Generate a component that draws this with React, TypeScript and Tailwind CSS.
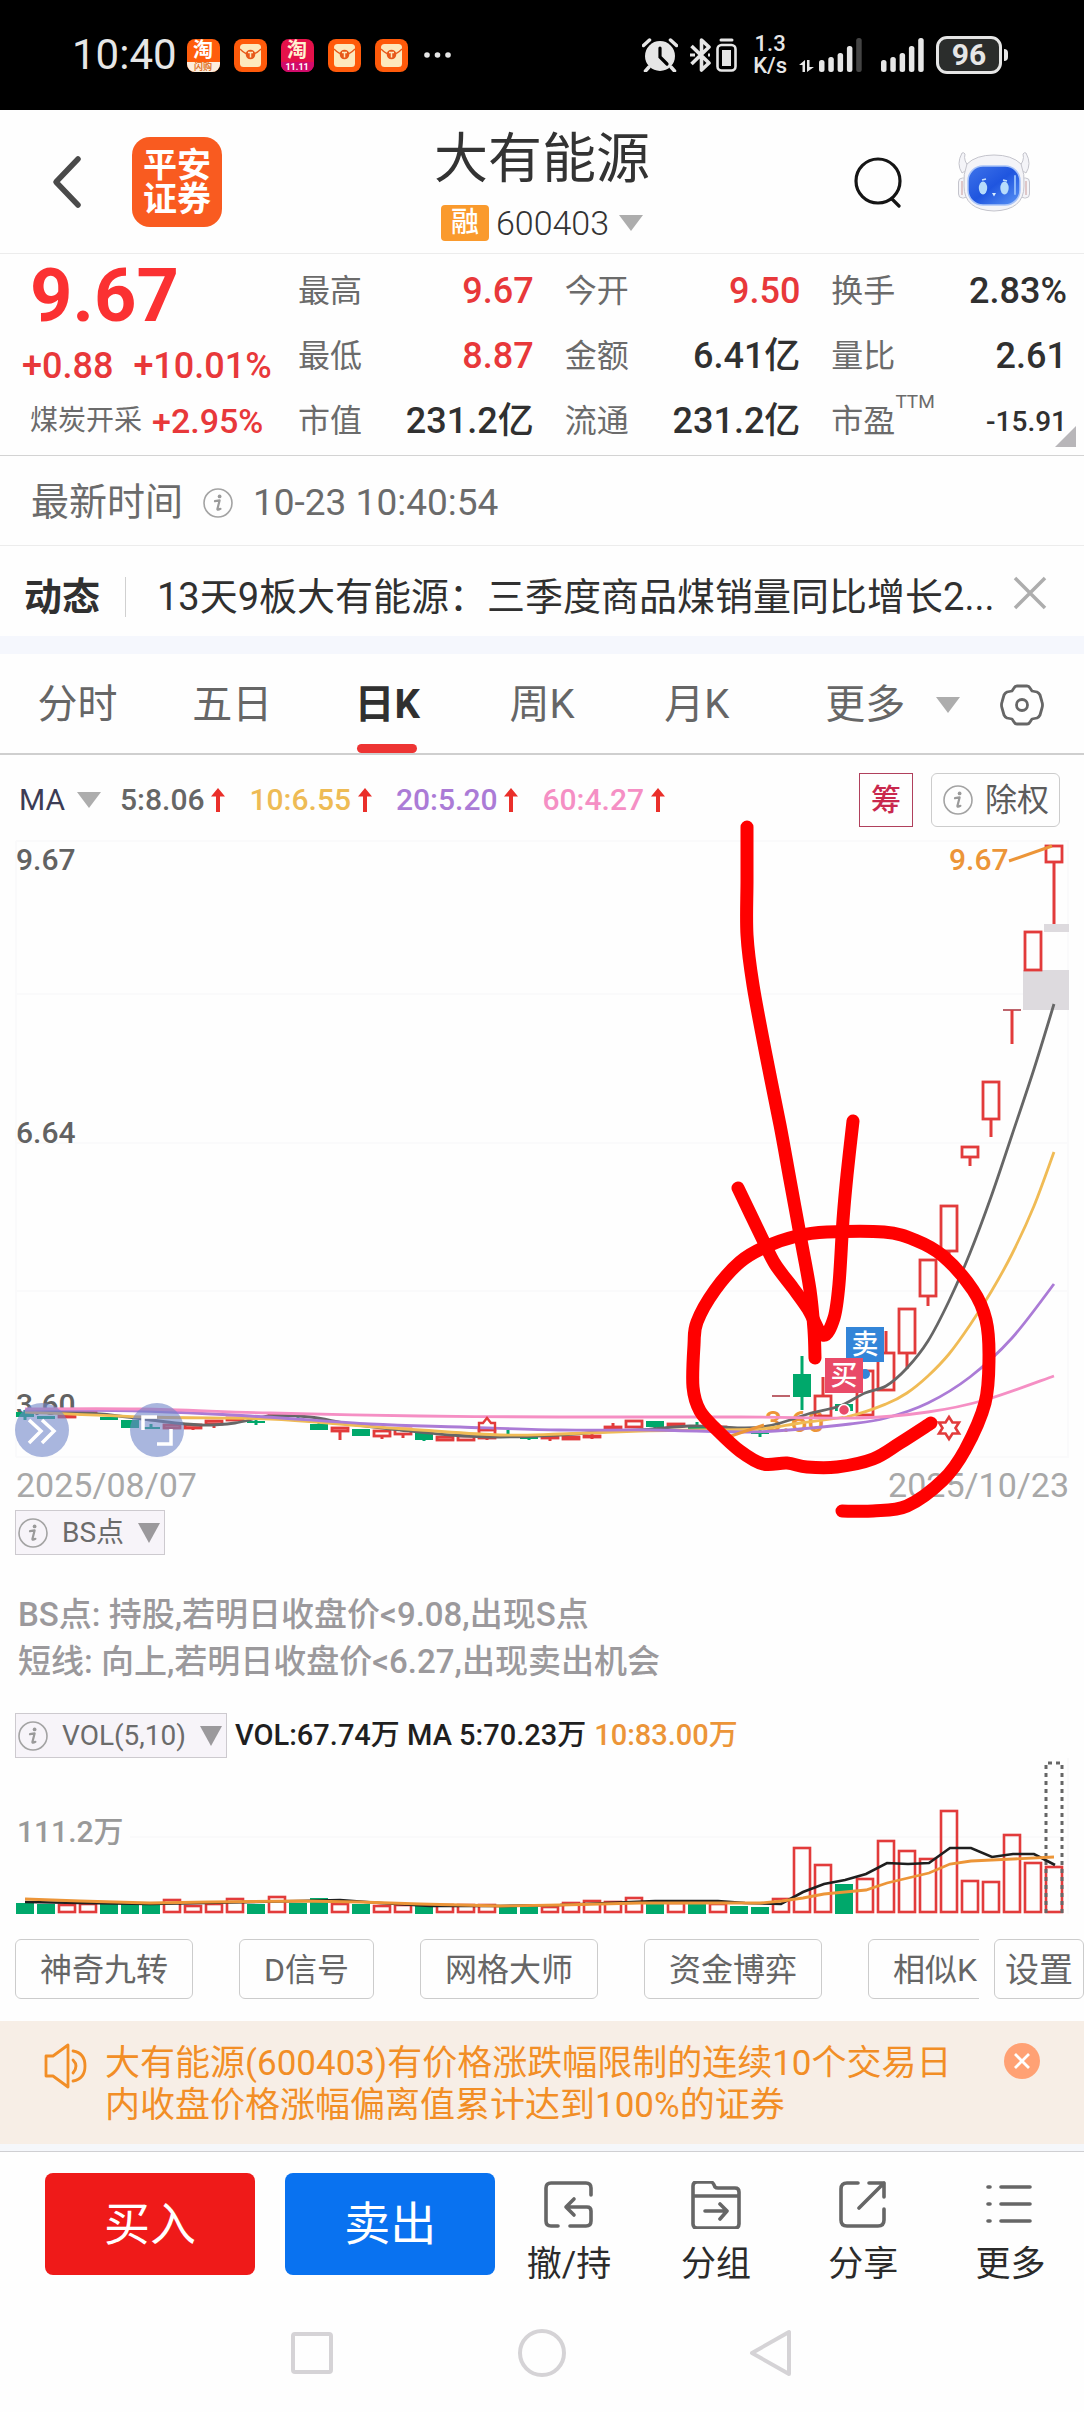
import type { ReactNode } from "react";

const RED = "#e23b3b";
const GREEN = "#00a86b";

/* ---------- small shared pieces ---------- */

function InfoIcon({ className = "h-[30px] w-[30px]" }: { className?: string }) {
  return (
    <svg viewBox="0 0 30 30" className={className} fill="none" aria-hidden="true">
      <circle cx="15" cy="15" r="14" stroke="#a3a3a3" strokeWidth="1.6" />
      <circle cx="16.6" cy="8.4" r="1.9" fill="#9a9a9a" />
      <path d="M12 13.2 L16.6 12.4 L14.4 21 Q14.2 22.6 17.4 20.8" stroke="#9a9a9a" strokeWidth="2.2" strokeLinejoin="round" strokeLinecap="round" />
    </svg>
  );
}

function Caret({ className = "h-4 w-6", color = "#adadad" }: { className?: string; color?: string }) {
  return (
    <svg viewBox="0 0 24 16" preserveAspectRatio="none" className={className} aria-hidden="true">
      <path d="M0 0H24L12 16Z" fill={color} />
    </svg>
  );
}

function UpArrow() {
  return (
    <svg viewBox="0 0 14 24" className="h-6 w-3.5" aria-hidden="true">
      <path d="M7 0L14 8.5H9V24H5V8.5H0Z" fill="#ea2f2a" />
    </svg>
  );
}

/* ---------- status bar ---------- */

function EnvelopeIcon() {
  return (
    <svg viewBox="0 0 33 33" className="h-[33px] w-[33px]" aria-hidden="true">
      <rect width="33" height="33" rx="8" fill="#ff5a0a" />
      <rect x="6" y="5" width="21" height="23" rx="3.5" fill="#fde9bd" />
      <path d="M6 10Q16.5 21 27 10" fill="none" stroke="#e8591a" strokeWidth="1.3" />
      <circle cx="16.5" cy="15.5" r="4.8" fill="#e8591a" />
      <path d="M14 13.5H19M16.5 13.5V18.5" stroke="#fde9bd" strokeWidth="1.5" />
    </svg>
  );
}

function SaleIcon({ festive = false }: { festive?: boolean }) {
  return (
    <div className={`flex h-[33px] w-[33px] flex-col items-center overflow-hidden rounded-lg font-bold text-white ${festive ? "bg-[#e5114a]" : "bg-[#ff5d0c]"}`}>
      <span className={`text-[20px] leading-[23px] ${festive ? "text-[#fff3d0]" : ""}`}>淘</span>
      {festive ? (
        <span className="w-full bg-[#d10b6b] text-center text-[9px] leading-[10px]">11.11</span>
      ) : (
        <span className="w-full bg-[#fdeedd] text-center text-[9px] leading-[10px] text-[#e0762f]">闪购</span>
      )}
    </div>
  );
}

function Signal({ dim = false }: { dim?: boolean }) {
  const tops = [22, 19, 15, 8, 0];
  return (
    <svg viewBox="0 0 43 34" className="h-[34px] w-[43px]" aria-hidden="true">
      {tops.map((t, i) => (
        <rect key={i} x={i * 9.3} y={t} width="5.5" height={34 - t} rx="2.5" fill={dim && i === 4 ? "#444" : "#e6e6e6"} />
      ))}
    </svg>
  );
}

function StatusBar() {
  return (
    <div className="flex items-center justify-between bg-black px-[72px] py-[33px] text-[#e6e6e6]">
      <div className="flex items-center">
        <span className="mr-2.5 text-[42px] leading-[38px]">10:40</span>
        <div className="flex items-center gap-3.5">
          <SaleIcon />
          <EnvelopeIcon />
          <SaleIcon festive />
          <EnvelopeIcon />
          <EnvelopeIcon />
        </div>
        <svg viewBox="0 0 27 8" className="ml-4 h-2 w-[27px]" fill="#e6e6e6" aria-hidden="true">
          <circle cx="3" cy="4" r="2.8" />
          <circle cx="13.5" cy="4" r="2.8" />
          <circle cx="24" cy="4" r="2.8" />
        </svg>
      </div>
      <div className="flex items-center">
        <svg viewBox="0 0 36 34" className="h-[34px] w-9" aria-hidden="true">
          <circle cx="18" cy="18" r="15" fill="#e6e6e6" />
          <path d="M1.5 7.5L7.5 2M34.5 7.5L28.5 2M7 29L3.5 33M29 29L32.5 33" stroke="#e6e6e6" strokeWidth="3.5" strokeLinecap="round" />
          <path d="M18 10V19L25 26" fill="none" stroke="#000" strokeWidth="3.2" strokeLinecap="round" />
        </svg>
        <svg viewBox="0 0 22 34" className="ml-3 h-[34px] w-[22px]" fill="none" stroke="#e6e6e6" strokeWidth="3.6" strokeLinejoin="round" aria-hidden="true">
          <path d="M1.5 8L19 25L11.5 32V2L19 9L1.5 26" />
          <path d="M0 17H5M18 17H20" strokeWidth="3" />
        </svg>
        <svg viewBox="0 0 21 34" className="ml-1 h-[34px] w-[21px]" aria-hidden="true">
          <path d="M5 2H16" stroke="#e6e6e6" strokeWidth="3" strokeLinecap="round" />
          <rect x="1.5" y="7" width="18" height="25.5" rx="4" fill="none" stroke="#e6e6e6" strokeWidth="2.6" />
          <rect x="6" y="12" width="9" height="16" fill="#e6e6e6" />
        </svg>
        <div className="ml-4 text-center text-[22px] leading-[22px] font-medium">
          <div>1.3</div>
          <div>K/s</div>
        </div>
        <svg viewBox="0 0 16 12" className="mb-[5px] ml-3 h-3 w-4 self-end" fill="#e6e6e6" aria-hidden="true">
          <path d="M0 5L6 0V12H3.5V5ZM8 0H10.5V7H15L8 12Z" />
        </svg>
        <div className="ml-1">
          <Signal dim />
        </div>
        <div className="ml-[19px]">
          <Signal />
        </div>
        <div className="ml-3 flex h-[38px] w-[66px] items-center justify-center rounded-[11px] border-[3px] border-[#e6e6e6] bg-[#2b2d2c] text-[30px] leading-[30px] font-bold">96</div>
        <div className="mr-1 ml-0.5 h-3 w-1 rounded-r bg-[#e6e6e6]" />
      </div>
    </div>
  );
}

/* ---------- header ---------- */

function RobotIcon() {
  return (
    <svg viewBox="0 0 72 60" className="h-[60px] w-[72px]" aria-hidden="true">
      <defs>
        <linearGradient id="visor" x1="0" y1="0" x2="1" y2="1">
          <stop offset="0" stopColor="#3f74ea" />
          <stop offset="0.5" stopColor="#1f55df" />
          <stop offset="1" stopColor="#5b95f5" />
        </linearGradient>
      </defs>
      <g fill="#f4f4f8" stroke="#c4c4cc" strokeWidth="1">
        <path d="M4 1Q-2 12 4 21L12 16Q5 9 7 2Q6 0 4 1ZM68 1Q74 12 68 21L60 16Q67 9 65 2Q66 0 68 1Z" />
        <rect x="0.5" y="26" width="9" height="20" rx="4" />
        <rect x="62.5" y="26" width="9" height="20" rx="4" />
        <path d="M9 12Q18 3 36 3Q54 3 63 12Q67 22 66 34Q66 58 36 59Q6 58 6 34Q5 22 9 12Z" />
      </g>
      <path d="M4 29V43M68 29V43" stroke="#dfc7c9" strokeWidth="2" />
      <rect x="10" y="14" width="52" height="39" rx="15" fill="url(#visor)" stroke="#a9c4f8" strokeWidth="1.5" />
      <ellipse cx="25" cy="36" rx="4.2" ry="6.5" fill="#b7dcfb" />
      <ellipse cx="46.5" cy="36" rx="4.2" ry="6.5" fill="#b7dcfb" />
      <path d="M34 41H38L36 44.5Z" fill="#d9edff" />
      <path d="M24 28L28 27M45 28L49 29" stroke="#c8e2fc" strokeWidth="1.5" />
      <path d="M57 24V42" stroke="#8cb8fb" strokeWidth="2" strokeLinecap="round" />
    </svg>
  );
}

function Header() {
  return (
    <header className="grid grid-cols-[1fr_auto_1fr] items-center border-b border-[#ececec] pt-[17px] pb-3">
      <div className="flex items-center gap-[50px] pb-1 pl-[52px]">
        <button type="button" aria-label="返回">
          <svg viewBox="0 0 30 54" className="h-[54px] w-[30px]" fill="none" stroke="#4a4a4a" strokeWidth="5.5" strokeLinecap="round" strokeLinejoin="round">
            <path d="M26 4L4 27L26 50" />
          </svg>
        </button>
        <div className="flex h-[90px] w-[90px] flex-col items-center justify-center rounded-[18px] bg-[#f95b20] text-[34px] leading-[34px] font-bold text-white">
          <span>平安</span>
          <span>证券</span>
        </div>
      </div>
      <div className="flex flex-col items-center text-[#333]">
        <h1 className="text-[54px] leading-[66px]">大有能源</h1>
        <button type="button" className="mt-3 flex items-center text-[34px] leading-9 font-light">
          <span className="mr-[7px] rounded-sm bg-[#fa9a2d] px-2.5 text-[28px] leading-9 font-medium text-white">融</span>
          600403
          <Caret className="ml-2.5 h-4 w-6" />
        </button>
      </div>
      <div className="flex items-center justify-end gap-14 pr-[54px] pb-1">
        <button type="button" aria-label="搜索">
          <svg viewBox="0 0 48 52" className="h-[52px] w-12" fill="none" stroke="#151515" strokeWidth="3.2" strokeLinecap="round">
            <circle cx="24" cy="25" r="22" />
            <path d="M38 43L45 50" />
          </svg>
        </button>
        <button type="button" aria-label="智能助手">
          <RobotIcon />
        </button>
      </div>
    </header>
  );
}

/* ---------- quote ---------- */

type Stat = { label: string; value: string; up?: boolean; sup?: string; small?: boolean };

const stats: Stat[] = [
  { label: "最高", value: "9.67", up: true },
  { label: "今开", value: "9.50", up: true },
  { label: "换手", value: "2.83%" },
  { label: "最低", value: "8.87", up: true },
  { label: "金额", value: "6.41亿" },
  { label: "量比", value: "2.61" },
  { label: "市值", value: "231.2亿" },
  { label: "流通", value: "231.2亿" },
  { label: "市盈", value: "-15.91", sup: "TTM", small: true },
];

function Quote() {
  return (
    <section className="relative flex border-b border-[#d3d3d3]">
      <div className="w-[27.5%] shrink-0 text-[#e8383a]">
        <div className="pl-[30px] text-[74px] leading-[84px] font-bold text-[#fb3132]">9.67</div>
        <div className="flex gap-5 pl-[22px] text-[36px] leading-[56px] font-medium">
          <span>+0.88</span>
          <span>+10.01%</span>
        </div>
        <div className="flex items-center gap-2.5 pl-[30px] text-[34px] leading-[54px] font-medium">
          <span className="text-[28px] font-normal text-[#6b6b6b]">煤炭开采</span>
          <span>+2.95%</span>
        </div>
      </div>
      <dl className="grid flex-1 grid-cols-3 gap-x-[31px] pt-[5px] pr-[17px] pb-px">
        {stats.map((s) => (
          <div key={s.label} className="flex justify-between leading-[65px]">
            <dt className="text-[32px] text-[#6b6b6b]">
              {s.label}
              {s.sup && <sup className="-top-6 text-[19px] leading-none">{s.sup}</sup>}
            </dt>
            <dd className={`font-medium ${s.small ? "text-[28px]" : "text-[36px]"} ${s.up ? "text-[#e8383a]" : "text-[#303030]"}`}>{s.value}</dd>
          </div>
        ))}
      </dl>
      <svg viewBox="0 0 21 21" className="absolute right-2 bottom-2 h-[21px] w-[21px]" aria-hidden="true">
        <path d="M21 0V21H0Z" fill="#b8b6b9" />
      </svg>
    </section>
  );
}

function News() {
  return (
    <>
      <div className="flex items-center border-b border-[#ececec] px-[31px] pt-[17px] pb-[13px] leading-[59px] text-[#6b6b6b]">
        <span className="mr-5 text-[38px]">最新时间</span>
        <InfoIcon />
        <time className="ml-5 text-[37px]">10-23 10:40:54</time>
      </div>
      <div className="flex items-center pt-[21px] pr-[37px] pb-[9px] pl-6 text-[38px] leading-[60px] text-[#303030]">
        <strong className="font-bold">动态</strong>
        <div className="mr-[31px] ml-[25px] h-10 w-px bg-[#d0d0d0]" />
        <a href="#news" className="min-w-0 flex-1 truncate">13天9板大有能源：三季度商品煤销量同比增长2...</a>
        <button type="button" aria-label="关闭动态" className="pb-2">
          <svg viewBox="0 0 34 34" className="h-[34px] w-[34px]" stroke="#adadad" strokeWidth="3.5">
            <path d="M2 2L32 32M32 2L2 32" />
          </svg>
        </button>
      </div>
      <div className="h-[18px] bg-[#f5f7fd]" />
    </>
  );
}

/* ---------- chart tabs ---------- */

function Tabs() {
  const tabs = ["分时", "五日", "日K", "周K", "月K"];
  return (
    <nav className="grid grid-cols-7 border-b-2 border-[#cfcfcf] text-[40px] text-[#666]">
      {tabs.map((t) => {
        const on = t === "日K";
        return (
          <button key={t} type="button" className="flex flex-col items-center pt-3">
            <span className={`leading-[78px] ${on ? "font-bold text-[#303030]" : ""}`}>{t}</span>
            <span className={`h-[9px] w-[60px] rounded-full ${on ? "bg-[#ee3433]" : ""}`} />
          </button>
        );
      })}
      <div className="col-span-2 flex items-center pt-0.5 pl-[51px]">
        <button type="button" className="flex items-center">
          更多
          <Caret className="ml-[31px] h-4 w-6" />
        </button>
        <button type="button" aria-label="图表设置" className="ml-10">
          <svg viewBox="0 0 44 44" className="h-11 w-11" fill="none" stroke="#666" strokeWidth="2.8" strokeLinejoin="round">
            <path d="M17 3H27Q29 3 30 5L32 8L37 9Q39 10 40 12L42 19Q43 22 42 25L40 32Q39 34 37 35L32 36L30 39Q29 41 27 41H17Q15 41 14 39L12 36L7 35Q5 34 4 32L2 25Q1 22 2 19L4 12Q5 10 7 9L12 8L14 5Q15 3 17 3Z" />
            <circle cx="22" cy="22" r="5.5" />
          </svg>
        </button>
      </div>
    </nav>
  );
}

function MaRow() {
  const items = [
    { t: "5:8.06", c: "text-[#666]" },
    { t: "10:6.55", c: "text-[#eebb55]" },
    { t: "20:5.20", c: "text-[#ab7bd6]" },
    { t: "60:4.27", c: "text-[#f58fc4]" },
  ];
  return (
    <div className="flex items-center pt-[18px] pr-6 pb-2 pl-[19px] text-[30px] leading-[54px] font-medium">
      <button type="button" className="mr-[19px] flex items-center gap-3 font-normal text-[#3c3c55]">
        MA
        <Caret />
      </button>
      <div className="flex gap-6">
        {items.map((i) => (
          <span key={i.t} className={`flex items-center gap-[7px] ${i.c}`}>
            {i.t}
            <UpArrow />
          </span>
        ))}
      </div>
      <button type="button" className="ml-auto border border-[#b0405c] px-[11px] text-[30px] leading-[52px] text-[#c9284d]">筹</button>
      <button type="button" className="ml-[18px] flex items-center gap-3 rounded-md border border-[#ccc] pr-2.5 pl-[11px] text-[32px] leading-[52px] font-normal text-[#5c5c5c]">
        <InfoIcon />
        除权
      </button>
    </div>
  );
}

/* ---------- price chart ---------- */

const cx = (i: number) => 25 + i * 21;

// [index, kind, body top, body bottom, high, low]
type Candle = [number, "u" | "d", number, number, number, number];

const candles: Candle[] = [
  [0, "d", 1412, 1417, 1410, 1420],
  [1, "d", 1416, 1419, 1416, 1419],
  [2, "u", 1415, 1417, 1415, 1417],
  [3, "u", 1412, 1414, 1412, 1414],
  [4, "d", 1417, 1420, 1417, 1420],
  [5, "d", 1420, 1428, 1420, 1428],
  [6, "d", 1427, 1429, 1424, 1429],
  [7, "u", 1425, 1428, 1425, 1428],
  [8, "u", 1425, 1428, 1425, 1430],
  [9, "u", 1421, 1424, 1421, 1428],
  [10, "u", 1418, 1420, 1418, 1420],
  [11, "d", 1421, 1423, 1418, 1425],
  [12, "u", 1415, 1416, 1414, 1418],
  [13, "d", 1416, 1417, 1414, 1418],
  [14, "d", 1424, 1430, 1418, 1430],
  [15, "u", 1428, 1431, 1428, 1440],
  [16, "d", 1429, 1436, 1429, 1436],
  [17, "u", 1431, 1436, 1431, 1439],
  [18, "u", 1429, 1434, 1429, 1438],
  [19, "d", 1430, 1440, 1429, 1441],
  [20, "u", 1437, 1440, 1436, 1441],
  [21, "u", 1436, 1440, 1436, 1440],
  [22, "u", 1430, 1438, 1428, 1440],
  [23, "d", 1434, 1435, 1430, 1436],
  [24, "d", 1437, 1439, 1434, 1440],
  [25, "u", 1437, 1438, 1436, 1441],
  [26, "u", 1437, 1439, 1436, 1440],
  [27, "u", 1436, 1437, 1431, 1439],
  [28, "u", 1427, 1428, 1423, 1430],
  [29, "u", 1421, 1427, 1420, 1428],
  [30, "d", 1421, 1427, 1421, 1428],
  [31, "u", 1424, 1426, 1423, 1427],
  [32, "d", 1426, 1429, 1422, 1430],
  [33, "u", 1427, 1428, 1425, 1430],
  [34, "d", 1428, 1430, 1427, 1432],
  [35, "d", 1433, 1434, 1430, 1437],
  [37, "d", 1374, 1397, 1356, 1410],
  [38, "u", 1396, 1416, 1377, 1416],
  [39, "d", 1404, 1411, 1404, 1411],
  [40, "u", 1371, 1415, 1371, 1415],
  [41, "u", 1353, 1390, 1331, 1390],
  [42, "u", 1309, 1353, 1309, 1369],
  [43, "u", 1260, 1296, 1260, 1306],
  [44, "u", 1206, 1251, 1206, 1258],
  [45, "u", 1147, 1157, 1147, 1166],
  [46, "u", 1082, 1119, 1082, 1137],
  [48, "u", 932, 970, 932, 970],
  [49, "u", 846, 862, 846, 924],
];

const starPath = "M0 -11L3.5 -5.5H10L6.5 0L10 5.5H3.5L0 11L-3.5 5.5H-10L-6.5 0L-10 -5.5H-3.5Z";

function smooth(points: number[][]) {
  let d = `M${points[0][0]} ${points[0][1]}`;
  for (let i = 0; i < points.length - 1; i++) {
    const a = points[Math.max(i - 1, 0)];
    const b = points[i];
    const c = points[i + 1];
    const e = points[Math.min(i + 2, points.length - 1)];
    d += `C${b[0] + (c[0] - a[0]) / 6} ${b[1] + (c[1] - a[1]) / 6} ${c[0] - (e[0] - b[0]) / 6} ${c[1] - (e[1] - b[1]) / 6} ${c[0]} ${c[1]}`;
  }
  return d;
}

const averages = [
  { color: "#666", pts: [[25, 1410], [100, 1414], [150, 1420], [200, 1425], [235, 1423], [270, 1416], [310, 1417], [350, 1424], [400, 1430], [450, 1435], [500, 1437], [560, 1435], [600, 1432], [640, 1430], [690, 1426], [720, 1427], [745, 1428], [768, 1426], [790, 1420], [811, 1413], [840, 1406], [865, 1393], [886, 1386], [907, 1368], [928, 1341], [949, 1301], [970, 1253], [991, 1197], [1012, 1135], [1034, 1069], [1054, 1004]] },
  { color: "#f0bb55", pts: [[25, 1412], [150, 1417], [270, 1419], [350, 1425], [420, 1430], [500, 1435], [560, 1434], [640, 1431], [700, 1430], [760, 1429], [800, 1423], [850, 1416], [886, 1404], [907, 1393], [928, 1376], [949, 1354], [970, 1325], [991, 1292], [1012, 1254], [1034, 1206], [1054, 1152]] },
  { color: "#ab7bd6", pts: [[25, 1410], [140, 1411], [250, 1416], [370, 1424], [460, 1427], [560, 1430], [650, 1430], [750, 1432], [800, 1429], [850, 1424], [886, 1418], [928, 1403], [970, 1377], [1012, 1338], [1054, 1284]] },
  { color: "#f58fc4", pts: [[25, 1409], [140, 1409], [270, 1413], [420, 1416], [560, 1417], [740, 1417], [860, 1418], [928, 1412], [985, 1400], [1054, 1376]] },
];

const loop = [[842, 1511], [873, 1511], [907, 1506], [943, 1480], [965, 1450], [985, 1403], [989, 1358], [986, 1320], [973, 1290], [943, 1256], [915, 1240], [884, 1232], [827, 1232], [797, 1236], [765, 1247], [740, 1262], [715, 1290], [697, 1322], [694, 1345], [693, 1387], [700, 1411], [717, 1430], [740, 1451], [763, 1464], [787, 1463], [807, 1467], [837, 1467], [873, 1459], [900, 1443], [931, 1423]];
const shaft = [[747, 827], [747, 880], [747, 935], [753, 985], [766, 1055], [780, 1125], [790, 1180], [801, 1240], [810, 1290], [814, 1330], [815, 1358]];
const head = [[738, 1188], [762, 1238], [775, 1264], [793, 1288], [808, 1309], [823, 1335], [834, 1318], [839, 1284], [843, 1220], [847, 1175], [853, 1121]];

function PriceChart() {
  return (
    <div className="relative">
      <svg viewBox="0 835 1084 675" className="block w-full overflow-visible" fill="none" role="img" aria-label="日K线图">
        <path d="M16 841H1069M16 994H1069M16 1143H1069M16 1291H1069M16 1457H1069M1068 841V1457M16 841V1457" stroke="#fafafb" strokeWidth="2" />
        <g fill="#626262" fontSize="30" fontWeight="500">
          <text x="16" y="870">9.67</text>
          <text x="16" y="1143">6.64</text>
          <text x="16" y="1415">3.60</text>
        </g>
        <g fill="#a8a8a8" fontSize="34">
          <text x="16" y="1497">2025/08/07</text>
          <text x="1069" y="1497" textAnchor="end">2025/10/23</text>
        </g>
        <g fill="#ec9538" fontSize="30" fontWeight="500">
          <text x="949" y="870">9.67</text>
          <text x="765" y="1432">3.60</text>
        </g>

        <path d="M1023 970H1069V1010H1023ZM1044 924H1069V932H1044Z" fill="#dddade" />

        {candles.map(([i, k, top, bottom, high, low]) => {
          const x = cx(i);
          const color = k === "u" ? RED : GREEN;
          return (
            <g key={i} stroke={color} strokeWidth="3">
              <path d={`M${x} ${high}V${top}M${x} ${bottom}V${low}`} />
              {k === "u" ? (
                <rect x={x - 8} y={top} width="16" height={bottom - top} strokeWidth="2.8" />
              ) : (
                <rect x={x - 9} y={top} width="18" height={bottom - top} fill={color} stroke="none" />
              )}
            </g>
          );
        })}
        <path d="M772 1396H790M1003 1010H1021" stroke="#a8323c" strokeWidth="1.5" />
        <path d="M1012 1010V1044" stroke={RED} strokeWidth="3" />

        {averages.map((a) => (
          <path key={a.color} d={smooth(a.pts)} stroke={a.color} strokeWidth="2.8" />
        ))}
        <path d="M1009 861L1052 846" stroke="#ec9538" strokeWidth="3" />
        <path d="M728 1437L764 1425" stroke="#ec9538" strokeWidth="3" />

        <path d={starPath} transform="translate(949 1428)" stroke={RED} strokeWidth="2.6" />
        <path d="M479 1431V1423H483L487 1418L491 1423H495V1431" stroke={RED} strokeWidth="2.4" />

        <circle cx="865" cy="1374" r="5" fill="#3385d8" />
        <rect x="846" y="1327" width="38" height="35" fill="#3385d8" />
        <rect x="825" y="1358" width="38" height="35" fill="#e94a68" />
        <g fill="#fff" fontSize="27" fontWeight="500" textAnchor="middle">
          <text x="865" y="1354">卖</text>
          <text x="844" y="1385">买</text>
        </g>
        <circle cx="844" cy="1410" r="5.5" fill="#e94a68" stroke="#fff" strokeWidth="1.5" />

        <g stroke="#f00" strokeWidth="13" strokeLinecap="round" strokeLinejoin="round">
          <path d={smooth(shaft)} />
          <path d={smooth(head)} />
          <path d={smooth(loop)} />
        </g>
      </svg>
      <RoundButton label="展开" place="left-[1.4%]">
        <path d="M14 17L26 28L14 40M27 17L39 28L27 40" />
      </RoundButton>
      <RoundButton label="全屏" place="left-[12%]">
        <path d="M13 27V14H27M41 26V41H27" />
      </RoundButton>
    </div>
  );
}

function RoundButton({ label, place, children }: { label: string; place: string; children: ReactNode }) {
  return (
    <button type="button" aria-label={label} className={`absolute bottom-[53px] h-[54px] w-[54px] rounded-full bg-[#6f86c8]/60 ${place}`}>
      <svg viewBox="0 0 54 54" className="h-full w-full" fill="none" stroke="#fff" strokeWidth="3.5">
        {children}
      </svg>
    </button>
  );
}

/* ---------- volume ---------- */

const volumeTops = [1903, 1904, 1905, 1904, 1904, 1904, 1904, 1900, 1906, 1904, 1899, 1904, 1897, 1903, 1898, 1904, 1904, 1906, 1905, 1905, 1905, 1905, 1905, 1905, 1906, 1907, 1903, 1901, 1902, 1898, 1904, 1903, 1903, 1904, 1906, 1907, 1899, 1848, 1865, 1884, 1879, 1841, 1851, 1859, 1811, 1881, 1882, 1835, 1863, 1867];
const volumeDown = new Set([0, 1, 4, 5, 6, 11, 13, 14, 16, 19, 23, 24, 30, 32, 34, 35, 39]);

function VolumeChart() {
  return (
    <svg viewBox="0 1758 1084 156" className="block w-full" fill="none" role="img" aria-label="成交量">
      <path d="M130 1837H1069M1068 1758V1914" stroke="#fafafb" strokeWidth="2" />
      <text x="17" y="1842" fill="#999" fontSize="30" fontWeight="500">111.2万</text>
      {volumeTops.map((t, i) =>
        volumeDown.has(i) ? (
          <rect key={i} x={cx(i) - 9} y={t} width="18" height={1914 - t} fill={GREEN} />
        ) : (
          <rect key={i} x={cx(i) - 8} y={t} width="16" height={1912 - t} stroke={RED} strokeWidth="2.6" />
        )
      )}
      <path d="M1046 1913V1763H1062V1913" stroke="#666" strokeWidth="3" strokeDasharray="4 4" />
      <path d="M25 1902L80 1903L150 1904L300 1901L340 1900L380 1903L430 1906L500 1906L560 1905L655 1901L718 1901L745 1903L781 1904L803 1892L824 1884L845 1880L866 1874L887 1863L908 1864L929 1863L950 1848L971 1848L992 1857L1013 1854L1034 1854L1055 1865" stroke="#1f1f1f" strokeWidth="2.6" />
      <path d="M25 1899L80 1901L150 1903L210 1902L300 1901L360 1902L420 1904L500 1906L560 1905L640 1903L760 1903L782 1901L803 1898L824 1894L845 1892L866 1890L887 1883L908 1878L929 1873L950 1864L971 1861L1013 1859L1054 1857" stroke="#ec9538" strokeWidth="2.8" />
    </svg>
  );
}

function IndicatorButton({ children }: { children: ReactNode }) {
  return (
    <button type="button" className="flex items-center gap-3.5 border border-[#cdcacf] bg-[#f7f4f9] pr-1 pl-0.5 text-[28px] leading-[43px] text-[#6b6b6b]">
      <InfoIcon />
      {children}
      <Caret className="h-5 w-[22px]" color="#9b999c" />
    </button>
  );
}

function Indicators() {
  return (
    <>
      <div className="flex px-[15px]">
        <IndicatorButton>BS点</IndicatorButton>
      </div>
      <div className="mt-9 mb-7 px-[18px] text-[33px] leading-[47px] font-medium text-[#9b999c]">
        <p>BS点: 持股,若明日收盘价&lt;9.08,出现S点</p>
        <p>短线: 向上,若明日收盘价&lt;6.27,出现卖出机会</p>
      </div>
      <div className="flex items-center px-[15px] text-[29px] font-medium text-[#1f1f1f]">
        <IndicatorButton>
          <span className="font-normal">VOL(5,10)</span>
        </IndicatorButton>
        <span className="ml-2">VOL:67.74万 MA 5:70.23万</span>
        <span className="ml-2 text-[#ec9538]">10:83.00万</span>
      </div>
      <VolumeChart />
    </>
  );
}

function ToolPills() {
  const pills = ["神奇九转", "D信号", "网格大师", "资金博弈", "相似K"];
  return (
    <div className="mt-[25px] mb-[22px] flex pl-[15px] text-[#666]">
      <div className="flex min-w-0 flex-1 gap-[46px] overflow-hidden text-[32px]">
        {pills.map((p) => (
          <button key={p} type="button" className="shrink-0 rounded-md border border-[#ccc] px-6 pt-0.5 leading-[56px]">
            {p}
          </button>
        ))}
      </div>
      <button type="button" className="ml-[15px] rounded-md border border-[#ccc] px-2.5 pt-0.5 text-[34px] leading-[56px]">设置</button>
    </div>
  );
}

/* ---------- footer ---------- */

function Notice() {
  return (
    <div className="flex items-start border-b-[7px] border-[#f5f7fb] bg-[#f7eee6] pt-[22px] pb-[17px] pr-11 pl-11 text-[35px] leading-[42px] text-[#f28e26]">
      <svg viewBox="0 0 44 46" className="h-[46px] w-11 shrink-0" fill="none" stroke="#f28e26" strokeWidth="2.8" strokeLinecap="round" strokeLinejoin="round" aria-hidden="true">
        <path d="M2 13H9L24 2V44L9 33H2ZM29 17Q35 23 29 30M29 8Q41 10 41 23Q41 36 29 38" />
      </svg>
      <p className="mr-6 ml-[17px] flex-1">大有能源(600403)有价格涨跌幅限制的连续10个交易日内收盘价格涨幅偏离值累计达到100%的证券</p>
      <button type="button" aria-label="关闭提示">
        <svg viewBox="0 0 36 36" className="h-9 w-9">
          <circle cx="18" cy="18" r="18" fill="#ffa174" />
          <path d="M11 11L25 25M25 11L11 25" stroke="#fff" strokeWidth="2.8" />
        </svg>
      </button>
    </div>
  );
}

const actions: { label: string; icon: ReactNode }[] = [
  { label: "撤/持", icon: <path d="M47 14V7Q47 2 42 2H7Q2 2 2 7V40Q2 45 7 45H14M26 45H42Q47 45 47 40V30Q47 26 43 26H22M30 18L22 26L30 34" /> },
  { label: "分组", icon: <path d="M2 5Q2 1 6 1H20Q22 1 24 6Q25 7 27 7H44Q48 7 48 11V43Q48 47 44 47H6Q2 47 2 43ZM2 15H48M14 30H36M29 23L36 30L29 38" /> },
  { label: "分享", icon: <path d="M20 2H9Q3 2 3 8V39Q3 45 9 45H40Q46 45 46 39V28M31 2H46V16M46 2L21 27" /> },
  { label: "更多", icon: <path d="M3 6H5M16 6H45M3 23H5M16 23H45M3 40H5M16 40H45" /> },
];

function TradeBar() {
  return (
    <div className="flex items-start border-t border-[#cfcfd2] pt-[21px] pb-2">
      <div className="flex w-[45.7%] gap-[30px] pl-[45px] text-[46px] leading-[102px] text-white">
        <button type="button" className="flex-1 rounded-lg bg-[#ef1a19]">买入</button>
        <button type="button" className="flex-1 rounded-lg bg-[#0972f0]">卖出</button>
      </div>
      {actions.map((a) => (
        <button key={a.label} type="button" className="flex flex-1 flex-col items-center gap-3.5 pt-2 text-[35px] leading-[44px] text-[#2b2b2b]">
          <svg viewBox="0 0 50 48" className="h-12 w-[50px]" fill="none" stroke="#666" strokeWidth="3.6" strokeLinecap="round" strokeLinejoin="round" aria-hidden="true">
            {a.icon}
          </svg>
          {a.label}
        </button>
      ))}
    </div>
  );
}

function SystemNav() {
  return (
    <div className="flex items-center justify-center gap-[182px] py-[34px]">
      <button type="button" aria-label="最近任务" className="flex h-12 w-12 items-center justify-center">
        <span className="h-[42px] w-[42px] rounded border-4 border-[#d5d3d6]" />
      </button>
      <button type="button" aria-label="主屏幕" className="h-12 w-12 rounded-full border-4 border-[#d5d3d6]" />
      <button type="button" aria-label="系统返回">
        <svg viewBox="0 0 48 48" className="h-12 w-12" fill="none" stroke="#d5d3d6" strokeWidth="4" strokeLinejoin="round">
          <path d="M4 24L41 3V45Z" />
        </svg>
      </button>
    </div>
  );
}

export default function App() {
  return (
    <main className="min-h-screen w-full bg-[#fefefe] font-['Roboto','Noto_Sans_CJK_SC',sans-serif]">
      <StatusBar />
      <Header />
      <Quote />
      <News />
      <Tabs />
      <MaRow />
      <PriceChart />
      <Indicators />
      <ToolPills />
      <Notice />
      <TradeBar />
      <SystemNav />
    </main>
  );
}
